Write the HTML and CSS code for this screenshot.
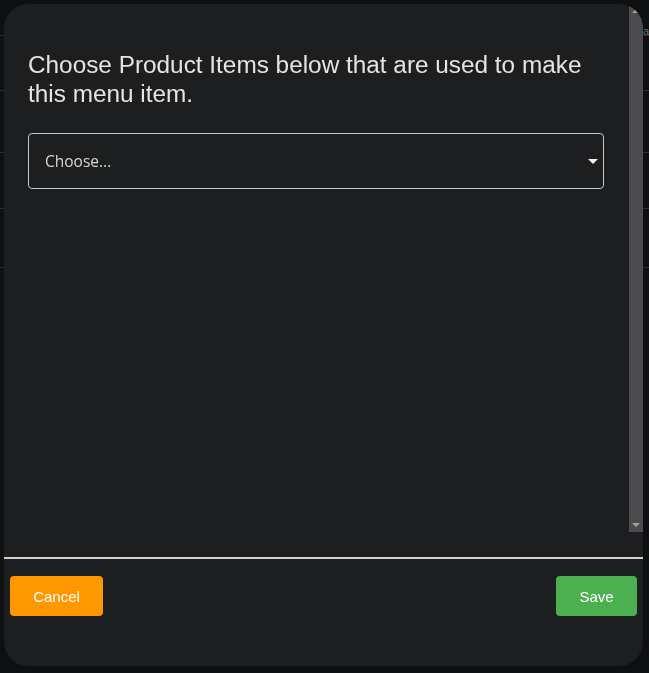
FILE: index.html
```html
<!DOCTYPE html>
<html>
<head>
<meta charset="utf-8">
<link rel="stylesheet" href="styles.css">
</head>
<body>
<div class="page">
  <div class="row r1"><span class="clip-text">a</span></div>
  <div class="row r2"></div>
  <div class="row r3"></div>
  <div class="row r4"></div>
  <div class="row r5"></div>
</div>
<div class="modal">
  <div class="modal-body">
    <div class="content">
      <h2 class="title">Choose Product Items below that are used to make this menu item.</h2>
      <div class="select">
        <span class="select-text">Choose...</span>
        <span class="caret"></span>
      </div>
    </div>
    <div class="scrollbar">
      <span class="arrow up"></span>
      <span class="arrow down"></span>
    </div>
  </div>
  <div class="spacer"></div>
  <div class="divider"></div>
  <div class="footer">
    <button class="btn cancel">Cancel</button>
    <button class="btn save">Save</button>
  </div>
</div>
</body>
</html>
```
FILE: styles.css
```css
html, body {
  margin: 0;
  padding: 0;
  background: #0e0f11;
  width: 649px;
  height: 673px;
  overflow: hidden;
  font-family: "Liberation Sans", Arial, sans-serif;
}
.page {
  width: 649px;
}
.row {
  border-bottom: 1px solid #2a2c30;
  box-sizing: border-box;
  position: relative;
}
.r1 { height: 36px; }
.r2 { height: 55px; }
.r3 { height: 62px; }
.r4 { height: 56px; }
.r5 { height: 59px; }
.clip-text {
  position: absolute;
  left: 643px;
  top: 25px;
  font-size: 11px;
  color: #6b6d72;
  font-family: "Liberation Sans", Arial, sans-serif;
  white-space: nowrap;
}
.modal {
  position: fixed;
  left: 4px;
  top: 4px;
  width: 639px;
  height: 662px;
  background: #1d1e20;
  border-radius: 24px;
  overflow: hidden;
  display: flex;
  flex-direction: column;
}
.modal-body {
  height: 528px;
  display: flex;
  flex-shrink: 0;
}
.content {
  flex: 1;
  padding: 47px 25px 0 24px;
}
.title {
  margin: 0;
  font-family: "Liberation Sans", Arial, sans-serif;
  font-weight: normal;
  font-size: 24.35px;
  line-height: 28.8px;
  color: #e4e4e4;
}
.select {
  margin-top: 24px;
  height: 56px;
  box-sizing: border-box;
  border: 1px solid #c6c7c9;
  border-radius: 4px;
  display: flex;
  align-items: center;
  justify-content: space-between;
  padding: 0 5px 0 16px;
}
.select-text {
  font-family: "Open Sans", "Noto Sans", sans-serif;
  font-size: 15.5px;
  color: #d6d6d6;
  margin-top: 1px;
}
.caret {
  width: 0;
  height: 0;
  border-left: 5px solid transparent;
  border-right: 5px solid transparent;
  border-top: 5px solid #f0f0f0;
  margin-top: 1px;
}
.scrollbar {
  width: 14px;
  background: #4b4b4d;
  display: flex;
  flex-direction: column;
  justify-content: space-between;
  align-items: center;
  padding: 5px 0 5px;
  box-sizing: border-box;
}
.arrow {
  width: 0;
  height: 0;
  border-left: 4px solid transparent;
  border-right: 4px solid transparent;
}
.arrow.up {
  border-bottom: 4px solid #a3a3a3;
}
.arrow.down {
  border-top: 4px solid #a3a3a3;
}
.spacer {
  height: 25px;
  flex-shrink: 0;
}
.divider {
  height: 2px;
  background: #cfcfcf;
  flex-shrink: 0;
}
.footer {
  display: flex;
  justify-content: space-between;
  padding: 17px 6px 0 6px;
}
.btn {
  height: 40px;
  border: none;
  border-radius: 4px;
  color: #ffffff;
  font-family: "Liberation Sans", Arial, sans-serif;
  font-size: 15px;
  padding: 0;
  cursor: pointer;
}
.cancel {
  width: 93px;
  background: #ff9800;
}
.save {
  width: 81px;
  background: #4caf50;
}
```
